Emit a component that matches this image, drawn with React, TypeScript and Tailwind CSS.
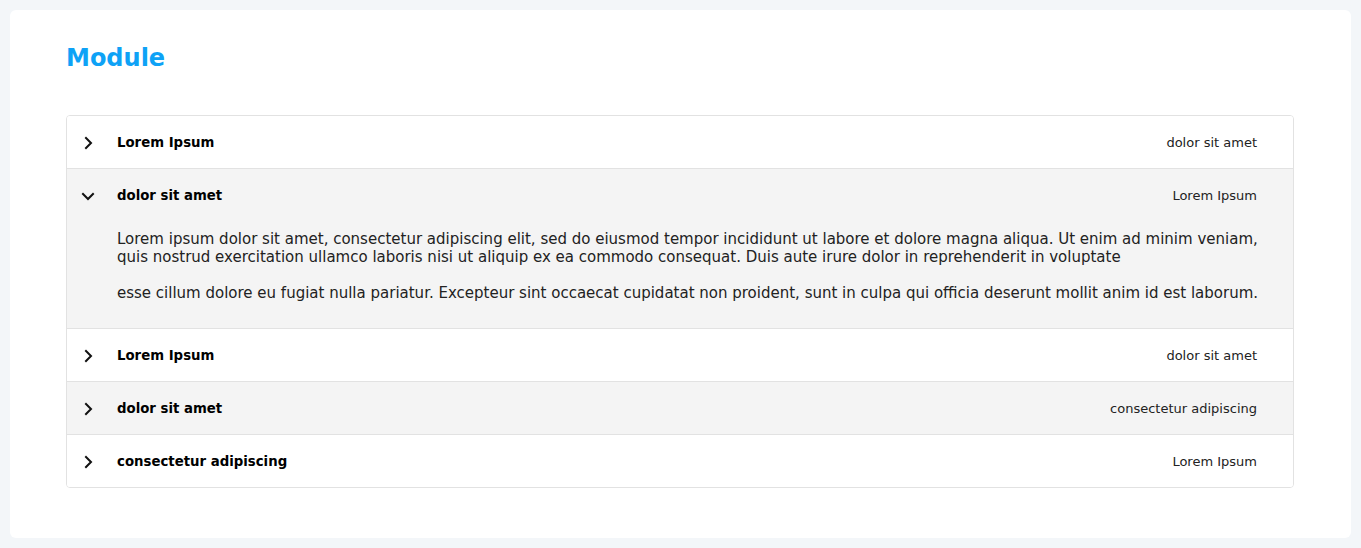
import { useState } from "react";

interface Item {
  id: number;
  title: string;
  meta: string;
}

const items: Item[] = [
  { id: 1, title: "Lorem Ipsum", meta: "dolor sit amet" },
  { id: 2, title: "dolor sit amet", meta: "Lorem Ipsum" },
  { id: 3, title: "Lorem Ipsum", meta: "dolor sit amet" },
  { id: 4, title: "dolor sit amet", meta: "consectetur adipiscing" },
  { id: 5, title: "consectetur adipiscing", meta: "Lorem Ipsum" },
];

function Chevron({ open }: { open: boolean }) {
  return (
    <svg
      width="14"
      height="14"
      viewBox="0 0 14 14"
      fill="none"
      stroke="#111"
      strokeWidth="2"
      strokeLinecap="square"
      className={open ? "rotate-90" : ""}
    >
      <path d="M5 2 L10 7 L5 12" />
    </svg>
  );
}

export default function App() {
  const [openId, setOpenId] = useState<number | null>(2);

  return (
    <div
      className="min-h-[548px] bg-[#f3f6f9] p-[10px]"
      style={{ fontFamily: '"DejaVu Sans", sans-serif' }}
    >
      <div className="min-h-[528px] rounded-md bg-white pt-[34px] pr-[57px] pb-[50px] pl-[56px]">
        <h1 className="text-[24px] font-bold leading-[28px] text-[#0ea2f6]">Module</h1>

        <div className="mt-[43px] overflow-hidden rounded border border-[#e2e2e2]">
          {items.map((item, i) => {
            const open = openId === item.id;
            return (
              <div
                key={item.id}
                className={`${i > 0 ? "border-t border-[#e2e2e2]" : ""} ${
                  i % 2 === 1 ? "bg-[#f4f4f4]" : "bg-white"
                }`}
              >
                <button
                  onClick={() => setOpenId(open ? null : item.id)}
                  className="flex h-[52px] w-full items-center pt-[1px] pr-[36px] pl-[14px] text-left"
                >
                  <span className="flex w-[36px] items-center">
                    <Chevron open={open} />
                  </span>
                  <span className="flex-1 text-[13.3px] font-bold text-black">{item.title}</span>
                  <span className="text-[13px] text-[#222]">{item.meta}</span>
                </button>
                {open && (
                  <div className="pt-[9px] pr-[34px] pb-[26px] pl-[50px] text-[15px] leading-[18px] text-[#222]">
                    <p className="mb-[18px]">
                      Lorem ipsum dolor sit amet, consectetur adipiscing elit, sed do eiusmod tempor
                      incididunt ut labore et dolore magna aliqua. Ut enim ad minim veniam, quis nostrud
                      exercitation ullamco laboris nisi ut aliquip ex ea commodo consequat. Duis aute
                      irure dolor in reprehenderit in voluptate
                    </p>
                    <p>
                      esse cillum dolore eu fugiat nulla pariatur. Excepteur sint occaecat cupidatat non
                      proident, sunt in culpa qui officia deserunt mollit anim id est laborum.
                    </p>
                  </div>
                )}
              </div>
            );
          })}
        </div>
      </div>
    </div>
  );
}
